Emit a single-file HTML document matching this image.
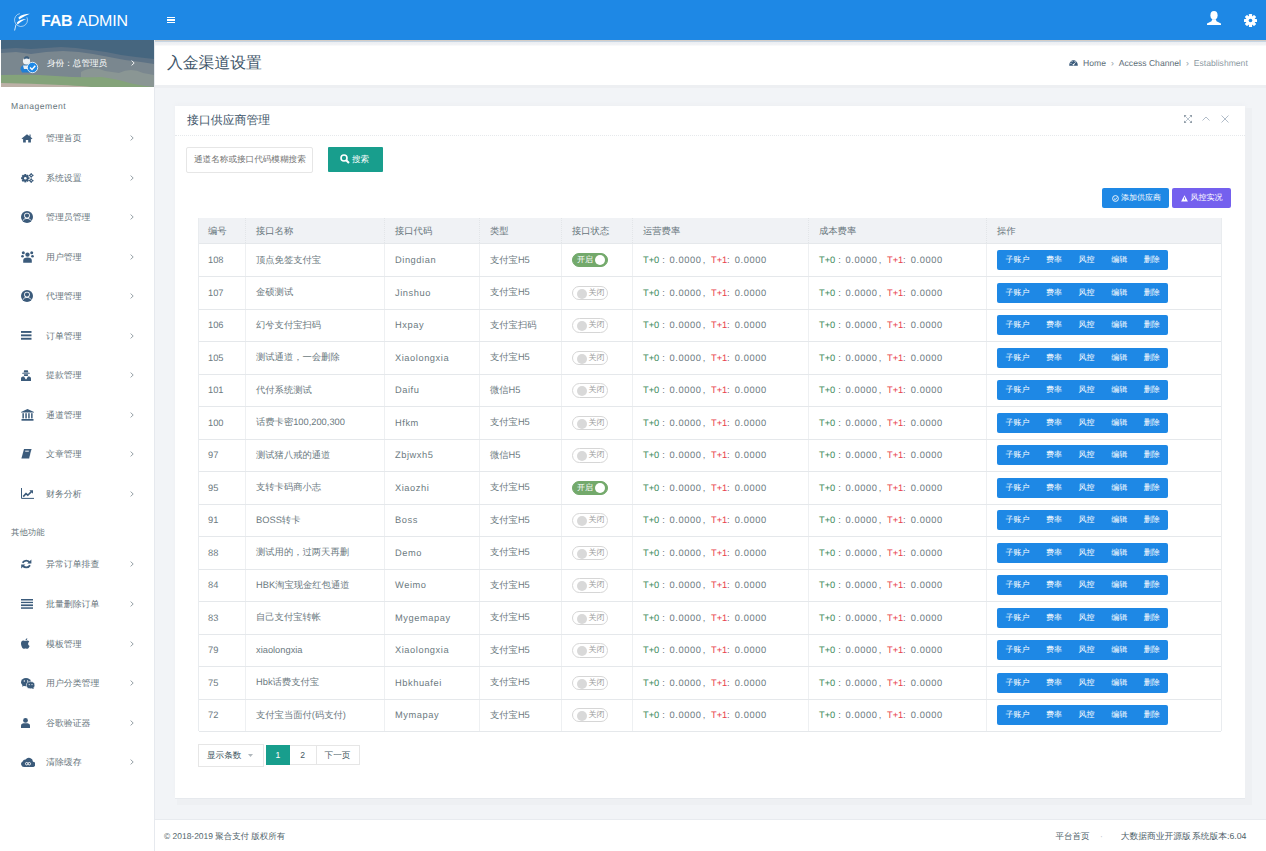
<!DOCTYPE html>
<html><head><meta charset="utf-8">
<style>
*{box-sizing:border-box;margin:0;padding:0}
html,body{width:1266px;height:851px;overflow:hidden}
body{position:relative;background:#f2f4f7;font-family:"Liberation Sans",sans-serif;color:#67757c;text-rendering:geometricPrecision}
.abs{position:absolute}
#hdr{position:absolute;left:0;top:0;width:1266px;height:40px;background:#1e88e5}
#logo{position:absolute;left:13px;top:12px}
#brand{position:absolute;left:41px;top:12.5px;font-size:16px;line-height:18px;color:#fff;white-space:nowrap;letter-spacing:-0.2px;word-spacing:1.5px}
#brand b{font-weight:bold}
#ham{position:absolute;left:167px;top:17px;width:8px;height:6px}
#ham i{position:absolute;left:0;width:8px;height:1.2px;background:#fff}
#side{position:absolute;left:0;top:40px;width:154px;height:811px;background:#fff}
#prof{position:absolute;left:1px;top:0;width:153px;height:47px;overflow:hidden;background:#46667f}
#prof .nm{position:absolute;left:46px;top:17px;font-size:8.6px;line-height:12px;color:#fff;white-space:nowrap}
#prof .ar{position:absolute;left:128px;top:16px;font-size:10px;color:#fff}
.sec{position:absolute;left:11px;font-size:8.6px;color:#67757c;white-space:nowrap;letter-spacing:0.5px}
.mi{position:absolute;left:0;width:154px;height:20px}
.mi .ico{position:absolute;left:21px;top:0;width:14px;height:20px;display:flex;align-items:center;justify-content:flex-start;color:#3b5b7b}
.mi .ico svg{display:block}
.mi .mt{position:absolute;left:46px;top:0;line-height:20px;font-size:8.9px;color:#67757c;white-space:nowrap}
.mi .ar{position:absolute;left:130px;top:7px}
#sline{position:absolute;left:154px;top:40px;width:1px;height:811px;background:#e6e9ee}
#tbar{position:absolute;left:155px;top:40px;width:1111px;height:45px;background:linear-gradient(to bottom,#d4cdc6 0,#d4cdc6 1px,#c6d5e3 1px,#c6d5e3 2px,#eceef2 2px,#f1f3f6 5px,#fff 6px);box-shadow:0 3px 0 #edeff2}
#tbar h1{position:absolute;left:12px;top:14px;font-size:15.8px;line-height:20px;font-weight:normal;color:#3e5569;white-space:nowrap}
#bc{position:absolute;left:1069px;top:57px;height:12px;font-size:8.6px;line-height:12px;white-space:nowrap;color:#5d6e78}
#bc .s{color:#9aa5ab;padding:0 5px}
#bc .l{color:#8d9aa2}
#card{position:absolute;left:175px;top:106px;width:1070px;height:692px;background:#fff;box-shadow:0 1px 0 #e6e9ed,0 -2px 4px #eef0f3}
#card .ttl{position:absolute;left:12px;top:6px;font-size:11.9px;line-height:16px;color:#3e5569;white-space:nowrap}
#card .hl{position:absolute;left:0;top:29px;width:1070px;height:0;border-top:1px dotted #e6e9ec}
#srch{position:absolute;left:11px;top:41px;width:127px;height:25.5px;border:1px solid #e6e6e6;border-radius:2px;font-size:8.6px;line-height:23px;padding-left:7px;color:#757575;white-space:nowrap;overflow:hidden}
#sbtn{position:absolute;left:153px;top:41px;width:54.5px;height:25px;background:#189e8d;border-radius:1px;color:#fff;font-size:8.6px;line-height:25px;white-space:nowrap}
#sbtn svg{position:absolute;left:12px;top:7px}
#sbtn span{position:absolute;left:24px;top:0}
.btn{position:absolute;top:82px;height:20px;border-radius:2px;color:#fff;font-size:8px;line-height:20px;white-space:nowrap}
#tbl{position:absolute;left:198px;top:218px;width:1023.5px;height:513px;border-left:1px solid #e9ecef;border-right:1px solid #e9ecef}
.thead{position:absolute;left:0;top:0;width:100%;height:25px;background:#f0f2f5}
.tr{position:absolute;left:0;width:100%;height:32.5px;border-top:1px solid #e5e8eb}
.tr:last-child{border-bottom:1px solid #e5e8eb;height:33px}
.td{position:absolute;top:0;height:100%;padding-left:10px;font-size:9.3px;white-space:nowrap;display:flex;align-items:center;border-left:1px solid #eef0f2;color:#6c7a81}
.td.code{letter-spacing:0.55px}
.td.th{font-size:9.3px;color:#67757c;border-left:1px dotted #e2e5e8;padding-top:1px}
.td:first-child{border-left:none}
.g{color:#3d8a5c}
.f1,.f2,.f3,.f4,.f5,.f6{display:inline-block;flex:none}
.f1{width:19.3px}.f2{width:7.2px}.f3{letter-spacing:0.6px}.f4{width:8.2px}.f3:nth-child(3){width:33.3px}.f5{width:16.1px}.f6{width:7.7px}
.r{color:#e8414b}
.sw{position:relative;width:36px;height:14.5px;border-radius:8px;border:1px solid #d6d6d6;background:#fff;font-size:8px;line-height:12.5px;white-space:nowrap}
.sw i{position:absolute;left:3.5px;top:2.2px;width:10px;height:10px;border-radius:50%;background:#d9d9d9}
.sw em{position:absolute;left:15.5px;top:0;font-style:normal;color:#9a9a9a}
.sw.on{background:#73a96b;border-color:#73a96b}
.sw.on i{left:21.5px;top:1.2px;background:#fff}
.sw.on em{left:4px;color:#fff}
.ops{display:flex;height:20px;background:#1e88e5;border-radius:2px;padding:0 0 0 8.4px;color:#fff;font-size:8px;line-height:20px}
.ops span{margin-right:16.6px}
.ops span:last-child{margin-right:8.4px}
#pg{position:absolute;left:198px;top:744px}
#footer{position:absolute;left:155px;top:819px;width:1111px;height:32px;background:#fff;border-top:1px solid #e8ebef}
#footer .l{position:absolute;left:9px;top:9.5px;font-size:8.45px;line-height:12px;color:#4f5f6a;white-space:nowrap}
#footer .rt{position:absolute;right:20.5px;top:9.5px;font-size:8.5px;line-height:12px;color:#4f5f6a;white-space:nowrap}
</style></head>
<body>
<div id="hdr">
  <svg id="logo" width="18" height="20" viewBox="0 0 18 20">
    <path d="M6.87 1.6A6.5 6.5 0 1 0 13.9 5.25" fill="none" stroke="#fff" stroke-width="0.8" opacity="0.7"/>
    <path d="M3 12.5L1.6 18.5" fill="none" stroke="#fff" stroke-width="1" opacity="0.8"/>
    <path d="M5.4 5.4C8 2.8 12 2 16.9 1.8C13 3.6 10 4.6 6.2 7.6Z" fill="#fff"/>
    <path d="M3.8 10.8C6 8 9 7.2 13.2 7C10 8.4 7.6 9.8 4.6 12.6Z" fill="#fff"/>
  </svg>
  <div id="brand"><b>FAB</b> ADMIN</div>
  <div id="ham"><i style="top:0"></i><i style="top:2.4px"></i><i style="top:4.8px"></i></div>
  <svg class="abs" style="left:1207px;top:11px" width="14" height="14" viewBox="0 0 14 14">
    <ellipse cx="7" cy="4.3" rx="3.6" ry="4.3" fill="#fff"/>
    <path d="M5.2 8.2H8.8L9.5 10.3 14 12.5V14H0V12.5L4.5 10.3Z" fill="#fff"/>
  </svg>
  <svg class="abs" style="left:1243.5px;top:13.5px" width="13" height="13" viewBox="0 0 13 13">
    <g fill="#fff" transform="translate(6.5 6.5)">
      <rect x="-1.6" y="-6.5" width="3.2" height="13" rx="0.6"/>
      <rect x="-1.6" y="-6.5" width="3.2" height="13" rx="0.6" transform="rotate(45)"/>
      <rect x="-1.6" y="-6.5" width="3.2" height="13" rx="0.6" transform="rotate(90)"/>
      <rect x="-1.6" y="-6.5" width="3.2" height="13" rx="0.6" transform="rotate(135)"/>
      <circle r="4.6"/>
    </g>
    <circle cx="6.5" cy="6.5" r="1.8" fill="#1e88e5"/>
  </svg>
</div>

<div id="side">
  <div id="prof">
    <svg class="abs" style="left:0;top:0" width="153" height="47" viewBox="0 0 153 47">
      <rect width="153" height="47" fill="#46667f"/>
      <path d="M0 9L15 8 30 9 45 8 60 7 75 8 90 10 105 12 120 15 135 17 153 19V47H0Z" fill="#5d7285"/>
      <path d="M0 13L15 12 30 14 45 12 62 11 78 12 92 14 108 17 124 20 140 22 153 24V47H0Z" fill="#7a878f"/>
      <path d="M80 32Q92 25 104 31L118 33Q130 27 142 33L153 35V47H80Z" fill="#8a9694"/>
      <path d="M0 35Q30 34 55 36T100 37Q115 39 125 42T153 47V47H0Z" fill="#84a37a"/>
      <path d="M0 43Q30 43.5 60 45T90 47H0Z" fill="#bcb0a6"/>
    </svg>
    <svg class="abs" style="left:18px;top:15px" width="20" height="19" viewBox="0 0 20 19">
      <path d="M1.5 14C2 10.5 4.5 9.5 8 9.5S13 11 13.5 14L12 17.5H3Z" fill="#1f7fd6"/>
      <circle cx="7.5" cy="6" r="3.6" fill="#eef2f5"/>
      <path d="M5 3C5.5 0.8 9 0.6 10.2 2.5L9.8 4.2C8.5 3.3 6.5 3.3 5.3 4.4Z" fill="#3d5f7e"/>
      <path d="M4 10.5H11L10 14H5Z" fill="#e9eef2"/>
      <circle cx="13.5" cy="12.5" r="5.2" fill="#1e88e5" stroke="#fff" stroke-width="0.8"/>
      <path d="M11 12.5L13 14.5 16.3 10.8" fill="none" stroke="#fff" stroke-width="1.4"/>
    </svg>
    <div class="nm">身份：总管理员</div>
    <svg class="abs" style="left:130px;top:20px" width="4" height="6" viewBox="0 0 4 6"><path d="M0.6 0.6L3.2 3 0.6 5.4" fill="none" stroke="#fff" stroke-width="0.9"/></svg>
  </div>
  <div class="sec" style="top:61px">Management</div>
  <div class="sec" style="top:487px;font-size:8.4px;letter-spacing:0">其他功能</div>
</div>
<div id="sidemenu" class="abs" style="left:0;top:0">
<div class="mi" style="top:128.0px"><span class="ico"><svg width="12" height="10" viewBox="0 0 12 10"><path d="M6 1.2L0.6 5.6 1.2 6.3 2.1 5.6V9.6H4.8V6.9H7.2V9.6H9.9V5.6L10.8 6.3 11.4 5.6 9.6 4.1V1.6H8.5V3.2Z" fill="currentColor"/></svg></span><span class="mt">管理首页</span><svg class="ar" width="4" height="6" viewBox="0 0 4 6"><path d="M0.6 0.6L3.2 3 0.6 5.4" fill="none" stroke="#7d8a92" stroke-width="0.8"/></svg></div>
<div class="mi" style="top:167.5px"><span class="ico"><svg width="13" height="10" viewBox="0 0 13 10"><g transform="translate(4.3 5.2)" fill="currentColor"><rect x="-1" y="-4.2" width="2" height="8.4"/><rect x="-1" y="-4.2" width="2" height="8.4" transform="rotate(45)"/><rect x="-1" y="-4.2" width="2" height="8.4" transform="rotate(90)"/><rect x="-1" y="-4.2" width="2" height="8.4" transform="rotate(135)"/><circle r="3.1"/></g><circle cx="4.3" cy="5.2" r="1.3" fill="#fff"/><g transform="translate(10.2 2.4)" fill="currentColor"><rect x="-0.6" y="-2.3" width="1.2" height="4.6"/><rect x="-2.3" y="-0.6" width="4.6" height="1.2"/><circle r="1.7"/></g><circle cx="10.2" cy="2.4" r="0.6" fill="#fff"/><g transform="translate(10.2 7.6)" fill="currentColor"><rect x="-0.6" y="-2.3" width="1.2" height="4.6"/><rect x="-2.3" y="-0.6" width="4.6" height="1.2"/><circle r="1.7"/></g><circle cx="10.2" cy="7.6" r="0.6" fill="#fff"/></svg></span><span class="mt">系统设置</span><svg class="ar" width="4" height="6" viewBox="0 0 4 6"><path d="M0.6 0.6L3.2 3 0.6 5.4" fill="none" stroke="#7d8a92" stroke-width="0.8"/></svg></div>
<div class="mi" style="top:207.0px"><span class="ico"><svg width="12" height="12" viewBox="0 0 12 12"><circle cx="6" cy="6" r="6" fill="currentColor"/><circle cx="6" cy="4.6" r="2.9" fill="#fff"/><circle cx="6" cy="4.6" r="2.1" fill="currentColor"/><path d="M1.9 9.6Q3.3 7.3 6 7.3T10.1 9.6" fill="none" stroke="#fff" stroke-width="0.9"/></svg></span><span class="mt">管理员管理</span><svg class="ar" width="4" height="6" viewBox="0 0 4 6"><path d="M0.6 0.6L3.2 3 0.6 5.4" fill="none" stroke="#7d8a92" stroke-width="0.8"/></svg></div>
<div class="mi" style="top:246.5px"><span class="ico"><svg width="13" height="12" viewBox="0 0 13 12"><circle cx="6.5" cy="3.6" r="2.2" fill="currentColor"/><circle cx="2.3" cy="1.8" r="1.5" fill="currentColor"/><circle cx="10.7" cy="1.8" r="1.5" fill="currentColor"/><circle cx="1.5" cy="5.3" r="1.3" fill="currentColor"/><circle cx="11.5" cy="5.3" r="1.3" fill="currentColor"/><path d="M2.2 11.8V9.4C2.2 7.6 3.8 6.6 6.5 6.6S10.8 7.6 10.8 9.4V11.8Z" fill="currentColor"/></svg></span><span class="mt">用户管理</span><svg class="ar" width="4" height="6" viewBox="0 0 4 6"><path d="M0.6 0.6L3.2 3 0.6 5.4" fill="none" stroke="#7d8a92" stroke-width="0.8"/></svg></div>
<div class="mi" style="top:286.0px"><span class="ico"><svg width="12" height="12" viewBox="0 0 12 12"><circle cx="6" cy="6" r="6" fill="currentColor"/><circle cx="6" cy="4.6" r="2.9" fill="#fff"/><circle cx="6" cy="4.6" r="2.1" fill="currentColor"/><path d="M1.9 9.6Q3.3 7.3 6 7.3T10.1 9.6" fill="none" stroke="#fff" stroke-width="0.9"/></svg></span><span class="mt">代理管理</span><svg class="ar" width="4" height="6" viewBox="0 0 4 6"><path d="M0.6 0.6L3.2 3 0.6 5.4" fill="none" stroke="#7d8a92" stroke-width="0.8"/></svg></div>
<div class="mi" style="top:325.5px"><span class="ico"><svg width="11" height="9" viewBox="0 0 11 9"><rect x="0" y="0" width="10.5" height="1.9" fill="currentColor"/><rect x="0" y="3.4" width="10.5" height="1.9" fill="currentColor"/><rect x="0" y="6.8" width="10.5" height="1.9" fill="currentColor"/></svg></span><span class="mt">订单管理</span><svg class="ar" width="4" height="6" viewBox="0 0 4 6"><path d="M0.6 0.6L3.2 3 0.6 5.4" fill="none" stroke="#7d8a92" stroke-width="0.8"/></svg></div>
<div class="mi" style="top:365.0px"><span class="ico"><svg width="10" height="11" viewBox="0 0 10 11"><path d="M2.6 2.6L3.2 0.3H6.8L7.4 2.6Z" fill="currentColor"/><rect x="1.2" y="2.8" width="7.6" height="0.9" fill="currentColor"/><path d="M2.8 4.2H7.2L6.8 6H3.2Z" fill="currentColor"/><path d="M0 11V8.4C0 7 1.2 6.4 3 6.4L5 9.5 7 6.4C8.8 6.4 10 7 10 8.4V11Z" fill="currentColor"/><path d="M4.2 7.6H5.8L5 9.6Z" fill="#fff"/></svg></span><span class="mt">提款管理</span><svg class="ar" width="4" height="6" viewBox="0 0 4 6"><path d="M0.6 0.6L3.2 3 0.6 5.4" fill="none" stroke="#7d8a92" stroke-width="0.8"/></svg></div>
<div class="mi" style="top:404.5px"><span class="ico"><svg width="13" height="12" viewBox="0 0 13 12"><path d="M6.5 0L0 3V3.6H13V3Z" fill="currentColor"/><rect x="1.4" y="4.2" width="1.5" height="5.2" fill="currentColor"/><rect x="4.3" y="4.2" width="1.5" height="5.2" fill="currentColor"/><rect x="7.2" y="4.2" width="1.5" height="5.2" fill="currentColor"/><rect x="10.1" y="4.2" width="1.5" height="5.2" fill="currentColor"/><rect x="0.5" y="10" width="12" height="1.7" fill="currentColor"/></svg></span><span class="mt">通道管理</span><svg class="ar" width="4" height="6" viewBox="0 0 4 6"><path d="M0.6 0.6L3.2 3 0.6 5.4" fill="none" stroke="#7d8a92" stroke-width="0.8"/></svg></div>
<div class="mi" style="top:444.0px"><span class="ico"><svg width="11" height="10" viewBox="0 0 11 10"><path d="M3 0H10.6L8.3 9.6H0.4Z" fill="currentColor"/><rect x="4.2" y="1.6" width="3.6" height="1.2" fill="#fff" opacity="0.8"/><path d="M10.6 0.8L8.5 9.8" stroke="#fff" stroke-width="0.5"/></svg></span><span class="mt">文章管理</span><svg class="ar" width="4" height="6" viewBox="0 0 4 6"><path d="M0.6 0.6L3.2 3 0.6 5.4" fill="none" stroke="#7d8a92" stroke-width="0.8"/></svg></div>
<div class="mi" style="top:483.5px"><span class="ico"><svg width="13" height="11" viewBox="0 0 13 11"><path d="M0.5 0V10.4H13" fill="none" stroke="currentColor" stroke-width="1"/><path d="M2.2 8.6L5 5.6 6.8 7.2 10.4 3.6" fill="none" stroke="currentColor" stroke-width="1.6"/><path d="M8.4 2.2H12V5.8Z" fill="currentColor"/></svg></span><span class="mt">财务分析</span><svg class="ar" width="4" height="6" viewBox="0 0 4 6"><path d="M0.6 0.6L3.2 3 0.6 5.4" fill="none" stroke="#7d8a92" stroke-width="0.8"/></svg></div>
<div class="mi" style="top:554.3px"><span class="ico"><svg width="11" height="10" viewBox="0 0 11 10"><path d="M9 3.8A4.2 4.2 0 0 0 1.6 3.8" fill="none" stroke="currentColor" stroke-width="1.8"/><path d="M10.4 0.4V4.6H6.2Z" fill="currentColor"/><path d="M1.6 6.2A4.2 4.2 0 0 0 9 6.2" fill="none" stroke="currentColor" stroke-width="1.8"/><path d="M0.2 9.6V5.4H4.4Z" fill="currentColor"/></svg></span><span class="mt">异常订单排查</span><svg class="ar" width="4" height="6" viewBox="0 0 4 6"><path d="M0.6 0.6L3.2 3 0.6 5.4" fill="none" stroke="#7d8a92" stroke-width="0.8"/></svg></div>
<div class="mi" style="top:593.9px"><span class="ico"><svg width="12" height="10" viewBox="0 0 12 10"><rect y="0" width="12" height="1.5" fill="currentColor"/><rect y="2.8" width="12" height="1.3" fill="currentColor"/><rect y="5.4" width="12" height="1.7" fill="currentColor"/><rect y="8.3" width="12" height="1.5" fill="currentColor"/></svg></span><span class="mt">批量删除订单</span><svg class="ar" width="4" height="6" viewBox="0 0 4 6"><path d="M0.6 0.6L3.2 3 0.6 5.4" fill="none" stroke="#7d8a92" stroke-width="0.8"/></svg></div>
<div class="mi" style="top:633.5px"><span class="ico"><svg width="9" height="11" viewBox="0 0 9 11"><path d="M4.5 3C3.6 3 3.1 2.5 2.3 2.5 1 2.5 0 3.8 0 5.6 0 7.8 1.5 10.8 2.6 10.8 3.4 10.8 3.6 10.4 4.5 10.4 5.4 10.4 5.6 10.8 6.4 10.8 7.4 10.8 8.3 8.9 8.6 8 7.6 7.5 7.1 6.7 7.1 5.7 7.1 4.8 7.6 4.1 8.3 3.6 7.8 2.9 7 2.5 6.3 2.5 5.6 2.5 5.1 3 4.5 3Z" fill="currentColor"/><path d="M4.5 2.4C4.4 1.4 5.2 0.4 6.3 0.2 6.4 1.2 5.6 2.3 4.5 2.4Z" fill="currentColor"/></svg></span><span class="mt">模板管理</span><svg class="ar" width="4" height="6" viewBox="0 0 4 6"><path d="M0.6 0.6L3.2 3 0.6 5.4" fill="none" stroke="#7d8a92" stroke-width="0.8"/></svg></div>
<div class="mi" style="top:673.1px"><span class="ico"><svg width="14" height="11" viewBox="0 0 14 11"><ellipse cx="5" cy="4.2" rx="5" ry="4.1" fill="currentColor"/><path d="M1.5 6.5L1.2 8.8 3.6 7.4Z" fill="currentColor"/><circle cx="3.3" cy="3" r="0.65" fill="#fff"/><circle cx="6.6" cy="3" r="0.65" fill="#fff"/><ellipse cx="9.6" cy="7.2" rx="4.2" ry="3.6" fill="currentColor" stroke="#fff" stroke-width="0.6"/><path d="M12.2 9.5L12.8 11 10.6 10.3Z" fill="currentColor"/><circle cx="8.2" cy="6.6" r="0.55" fill="#fff"/><circle cx="11" cy="6.6" r="0.55" fill="#fff"/></svg></span><span class="mt">用户分类管理</span><svg class="ar" width="4" height="6" viewBox="0 0 4 6"><path d="M0.6 0.6L3.2 3 0.6 5.4" fill="none" stroke="#7d8a92" stroke-width="0.8"/></svg></div>
<div class="mi" style="top:712.7px"><span class="ico"><svg width="9" height="10" viewBox="0 0 9 10"><circle cx="4.5" cy="2.4" r="2.4" fill="currentColor"/><path d="M0 10V7.6C0 5.8 1.4 5.2 4.5 5.2S9 5.8 9 7.6V10Z" fill="currentColor"/></svg></span><span class="mt">谷歌验证器</span><svg class="ar" width="4" height="6" viewBox="0 0 4 6"><path d="M0.6 0.6L3.2 3 0.6 5.4" fill="none" stroke="#7d8a92" stroke-width="0.8"/></svg></div>
<div class="mi" style="top:752.3px"><span class="ico"><svg width="14" height="10" viewBox="0 0 14 10"><path d="M3 10A3 3 0 0 1 1.6 4.4 3 3 0 0 1 4.6 2.4 4.2 4.2 0 0 1 12 4.8 2.6 2.6 0 0 1 11.4 10Z" fill="currentColor"/><circle cx="5.7" cy="6.7" r="1.25" fill="none" stroke="#fff" stroke-width="0.9"/><circle cx="8.3" cy="6.7" r="1.25" fill="none" stroke="#fff" stroke-width="0.9"/></svg></span><span class="mt">清除缓存</span><svg class="ar" width="4" height="6" viewBox="0 0 4 6"><path d="M0.6 0.6L3.2 3 0.6 5.4" fill="none" stroke="#7d8a92" stroke-width="0.8"/></svg></div>
</div>
<div id="sline"></div>

<div id="tbar"><h1>入金渠道设置</h1></div>
<div id="bc">
  <svg style="position:absolute;left:0;top:2px" width="9" height="7" viewBox="0 0 9 7"><path d="M0.2 6.8C0.2 -0.6 8.8 -0.6 8.8 6.8Z" fill="#3b5b7b"/><circle cx="2" cy="4.2" r="0.55" fill="#fff"/><circle cx="3" cy="2.3" r="0.55" fill="#fff"/><circle cx="6" cy="2.3" r="0.55" fill="#fff"/><path d="M4.5 5.6L6.6 3.4" stroke="#fff" stroke-width="0.8"/><circle cx="4.5" cy="5.6" r="0.9" fill="#fff"/></svg>
  <span style="padding-left:14px">Home</span><span class="s">›</span>Access Channel<span class="s">›</span><span class="l">Establishment</span>
</div>

<div class="abs" style="left:1245px;top:108px;width:7px;height:697px;background:#eef0f3"></div>
<div class="abs" style="left:177px;top:798px;width:1068px;height:7px;background:#eef0f3"></div>
<div id="card">
  <div class="ttl">接口供应商管理</div>
  <svg class="abs" style="left:1009px;top:9px" width="8" height="8" viewBox="0 0 8 8"><path d="M0.5 0.5L7.5 7.5M7.5 0.5L0.5 7.5" stroke="#a9b6c3" stroke-width="0.8"/><path d="M0 0H2.5L0 2.5ZM8 0V2.5L5.5 0ZM0 8V5.5L2.5 8ZM8 8H5.5L8 5.5Z" fill="#8f9ba6"/></svg>
  <svg class="abs" style="left:1027px;top:10px" width="8" height="6" viewBox="0 0 8 6"><path d="M0.5 4.5L4 1 7.5 4.5" fill="none" stroke="#a9b6c3" stroke-width="0.9"/></svg>
  <svg class="abs" style="left:1046px;top:9px" width="8" height="8" viewBox="0 0 8 8"><path d="M0.5 0.5L7.5 7.5M7.5 0.5L0.5 7.5" fill="none" stroke="#a9b6c3" stroke-width="0.9"/></svg>
  <div class="hl"></div>
  <div id="srch">通道名称或接口代码模糊搜索</div>
  <div id="sbtn"><svg width="10" height="10" viewBox="0 0 10 10"><circle cx="4" cy="4" r="3" fill="none" stroke="#fff" stroke-width="1.6"/><path d="M6.2 6.2L9 9" stroke="#fff" stroke-width="2"/></svg><span>搜索</span></div>
  <div class="btn" style="left:927px;width:67px;background:#1e88e5">
    <svg class="abs" style="left:10px;top:6.5px" width="7" height="7" viewBox="0 0 7 7"><circle cx="3.5" cy="3.5" r="2.9" fill="none" stroke="#fff" stroke-width="0.9"/><path d="M2 3.6L3.2 4.7 5.1 2.5" fill="none" stroke="#fff" stroke-width="0.9"/></svg>
    <span class="abs" style="left:19px;top:0">添加供应商</span>
  </div>
  <div class="btn" style="left:997px;width:59px;background:#7460ee">
    <svg class="abs" style="left:9px;top:6.5px" width="7" height="7" viewBox="0 0 7 7"><path d="M3.5 0.3L6.9 6.6H0.1Z" fill="#fff"/><rect x="3.05" y="2.4" width="0.9" height="2.3" fill="#7460ee"/></svg>
    <span class="abs" style="left:18.5px;top:0">风控实况</span>
  </div>
</div>

<div id="tbl">
<div class="thead"><div class="td th" style="left:-1.0px;width:47.0px">编号</div><div class="td th" style="left:46.0px;width:139.0px">接口名称</div><div class="td th" style="left:185.0px;width:95.0px">接口代码</div><div class="td th" style="left:280.0px;width:82.0px">类型</div><div class="td th" style="left:362.0px;width:71.0px">接口状态</div><div class="td th" style="left:433.0px;width:176.0px">运营费率</div><div class="td th" style="left:609.0px;width:178.0px">成本费率</div><div class="td th" style="left:787.0px;width:235.0px">操作</div></div>
<div class="tr" style="top:25.5px;top:25px;height:33px"><div class="td " style="left:-1.0px;width:47.0px">108</div><div class="td cjk" style="left:46.0px;width:139.0px">顶点免签支付宝</div><div class="td code" style="left:185.0px;width:95.0px">Dingdian</div><div class="td " style="left:280.0px;width:82.0px">支付宝H5</div><div class="td " style="left:362.0px;width:71.0px"><div class="sw on"><em>开启</em><i></i></div></div><div class="td " style="left:433.0px;width:176.0px"><span class="f1 g">T+0</span><span class="f2">:</span><span class="f3">0.0000</span><span class="f4">,</span><span class="f5 r">T+1</span><span class="f6">:</span><span class="f3">0.0000</span></div><div class="td " style="left:609.0px;width:178.0px"><span class="f1 g">T+0</span><span class="f2">:</span><span class="f3">0.0000</span><span class="f4">,</span><span class="f5 r">T+1</span><span class="f6">:</span><span class="f3">0.0000</span></div><div class="td " style="left:787.0px;width:235.0px"><div class="ops"><span>子账户</span><span>费率</span><span>风控</span><span>编辑</span><span>删除</span></div></div></div>
<div class="tr" style="top:58.0px"><div class="td " style="left:-1.0px;width:47.0px">107</div><div class="td cjk" style="left:46.0px;width:139.0px">金硕测试</div><div class="td code" style="left:185.0px;width:95.0px">Jinshuo</div><div class="td " style="left:280.0px;width:82.0px">支付宝H5</div><div class="td " style="left:362.0px;width:71.0px"><div class="sw"><i></i><em>关闭</em></div></div><div class="td " style="left:433.0px;width:176.0px"><span class="f1 g">T+0</span><span class="f2">:</span><span class="f3">0.0000</span><span class="f4">,</span><span class="f5 r">T+1</span><span class="f6">:</span><span class="f3">0.0000</span></div><div class="td " style="left:609.0px;width:178.0px"><span class="f1 g">T+0</span><span class="f2">:</span><span class="f3">0.0000</span><span class="f4">,</span><span class="f5 r">T+1</span><span class="f6">:</span><span class="f3">0.0000</span></div><div class="td " style="left:787.0px;width:235.0px"><div class="ops"><span>子账户</span><span>费率</span><span>风控</span><span>编辑</span><span>删除</span></div></div></div>
<div class="tr" style="top:90.5px"><div class="td " style="left:-1.0px;width:47.0px">106</div><div class="td cjk" style="left:46.0px;width:139.0px">幻兮支付宝扫码</div><div class="td code" style="left:185.0px;width:95.0px">Hxpay</div><div class="td " style="left:280.0px;width:82.0px">支付宝扫码</div><div class="td " style="left:362.0px;width:71.0px"><div class="sw"><i></i><em>关闭</em></div></div><div class="td " style="left:433.0px;width:176.0px"><span class="f1 g">T+0</span><span class="f2">:</span><span class="f3">0.0000</span><span class="f4">,</span><span class="f5 r">T+1</span><span class="f6">:</span><span class="f3">0.0000</span></div><div class="td " style="left:609.0px;width:178.0px"><span class="f1 g">T+0</span><span class="f2">:</span><span class="f3">0.0000</span><span class="f4">,</span><span class="f5 r">T+1</span><span class="f6">:</span><span class="f3">0.0000</span></div><div class="td " style="left:787.0px;width:235.0px"><div class="ops"><span>子账户</span><span>费率</span><span>风控</span><span>编辑</span><span>删除</span></div></div></div>
<div class="tr" style="top:123.0px"><div class="td " style="left:-1.0px;width:47.0px">105</div><div class="td cjk" style="left:46.0px;width:139.0px">测试通道，一会删除</div><div class="td code" style="left:185.0px;width:95.0px">Xiaolongxia</div><div class="td " style="left:280.0px;width:82.0px">支付宝H5</div><div class="td " style="left:362.0px;width:71.0px"><div class="sw"><i></i><em>关闭</em></div></div><div class="td " style="left:433.0px;width:176.0px"><span class="f1 g">T+0</span><span class="f2">:</span><span class="f3">0.0000</span><span class="f4">,</span><span class="f5 r">T+1</span><span class="f6">:</span><span class="f3">0.0000</span></div><div class="td " style="left:609.0px;width:178.0px"><span class="f1 g">T+0</span><span class="f2">:</span><span class="f3">0.0000</span><span class="f4">,</span><span class="f5 r">T+1</span><span class="f6">:</span><span class="f3">0.0000</span></div><div class="td " style="left:787.0px;width:235.0px"><div class="ops"><span>子账户</span><span>费率</span><span>风控</span><span>编辑</span><span>删除</span></div></div></div>
<div class="tr" style="top:155.5px"><div class="td " style="left:-1.0px;width:47.0px">101</div><div class="td cjk" style="left:46.0px;width:139.0px">代付系统测试</div><div class="td code" style="left:185.0px;width:95.0px">Daifu</div><div class="td " style="left:280.0px;width:82.0px">微信H5</div><div class="td " style="left:362.0px;width:71.0px"><div class="sw"><i></i><em>关闭</em></div></div><div class="td " style="left:433.0px;width:176.0px"><span class="f1 g">T+0</span><span class="f2">:</span><span class="f3">0.0000</span><span class="f4">,</span><span class="f5 r">T+1</span><span class="f6">:</span><span class="f3">0.0000</span></div><div class="td " style="left:609.0px;width:178.0px"><span class="f1 g">T+0</span><span class="f2">:</span><span class="f3">0.0000</span><span class="f4">,</span><span class="f5 r">T+1</span><span class="f6">:</span><span class="f3">0.0000</span></div><div class="td " style="left:787.0px;width:235.0px"><div class="ops"><span>子账户</span><span>费率</span><span>风控</span><span>编辑</span><span>删除</span></div></div></div>
<div class="tr" style="top:188.0px"><div class="td " style="left:-1.0px;width:47.0px">100</div><div class="td cjk" style="left:46.0px;width:139.0px">话费卡密100,200,300</div><div class="td code" style="left:185.0px;width:95.0px">Hfkm</div><div class="td " style="left:280.0px;width:82.0px">支付宝H5</div><div class="td " style="left:362.0px;width:71.0px"><div class="sw"><i></i><em>关闭</em></div></div><div class="td " style="left:433.0px;width:176.0px"><span class="f1 g">T+0</span><span class="f2">:</span><span class="f3">0.0000</span><span class="f4">,</span><span class="f5 r">T+1</span><span class="f6">:</span><span class="f3">0.0000</span></div><div class="td " style="left:609.0px;width:178.0px"><span class="f1 g">T+0</span><span class="f2">:</span><span class="f3">0.0000</span><span class="f4">,</span><span class="f5 r">T+1</span><span class="f6">:</span><span class="f3">0.0000</span></div><div class="td " style="left:787.0px;width:235.0px"><div class="ops"><span>子账户</span><span>费率</span><span>风控</span><span>编辑</span><span>删除</span></div></div></div>
<div class="tr" style="top:220.5px"><div class="td " style="left:-1.0px;width:47.0px">97</div><div class="td cjk" style="left:46.0px;width:139.0px">测试猪八戒的通道</div><div class="td code" style="left:185.0px;width:95.0px">Zbjwxh5</div><div class="td " style="left:280.0px;width:82.0px">微信H5</div><div class="td " style="left:362.0px;width:71.0px"><div class="sw"><i></i><em>关闭</em></div></div><div class="td " style="left:433.0px;width:176.0px"><span class="f1 g">T+0</span><span class="f2">:</span><span class="f3">0.0000</span><span class="f4">,</span><span class="f5 r">T+1</span><span class="f6">:</span><span class="f3">0.0000</span></div><div class="td " style="left:609.0px;width:178.0px"><span class="f1 g">T+0</span><span class="f2">:</span><span class="f3">0.0000</span><span class="f4">,</span><span class="f5 r">T+1</span><span class="f6">:</span><span class="f3">0.0000</span></div><div class="td " style="left:787.0px;width:235.0px"><div class="ops"><span>子账户</span><span>费率</span><span>风控</span><span>编辑</span><span>删除</span></div></div></div>
<div class="tr" style="top:253.0px"><div class="td " style="left:-1.0px;width:47.0px">95</div><div class="td cjk" style="left:46.0px;width:139.0px">支转卡码商小志</div><div class="td code" style="left:185.0px;width:95.0px">Xiaozhi</div><div class="td " style="left:280.0px;width:82.0px">支付宝H5</div><div class="td " style="left:362.0px;width:71.0px"><div class="sw on"><em>开启</em><i></i></div></div><div class="td " style="left:433.0px;width:176.0px"><span class="f1 g">T+0</span><span class="f2">:</span><span class="f3">0.0000</span><span class="f4">,</span><span class="f5 r">T+1</span><span class="f6">:</span><span class="f3">0.0000</span></div><div class="td " style="left:609.0px;width:178.0px"><span class="f1 g">T+0</span><span class="f2">:</span><span class="f3">0.0000</span><span class="f4">,</span><span class="f5 r">T+1</span><span class="f6">:</span><span class="f3">0.0000</span></div><div class="td " style="left:787.0px;width:235.0px"><div class="ops"><span>子账户</span><span>费率</span><span>风控</span><span>编辑</span><span>删除</span></div></div></div>
<div class="tr" style="top:285.5px"><div class="td " style="left:-1.0px;width:47.0px">91</div><div class="td cjk" style="left:46.0px;width:139.0px">BOSS转卡</div><div class="td code" style="left:185.0px;width:95.0px">Boss</div><div class="td " style="left:280.0px;width:82.0px">支付宝H5</div><div class="td " style="left:362.0px;width:71.0px"><div class="sw"><i></i><em>关闭</em></div></div><div class="td " style="left:433.0px;width:176.0px"><span class="f1 g">T+0</span><span class="f2">:</span><span class="f3">0.0000</span><span class="f4">,</span><span class="f5 r">T+1</span><span class="f6">:</span><span class="f3">0.0000</span></div><div class="td " style="left:609.0px;width:178.0px"><span class="f1 g">T+0</span><span class="f2">:</span><span class="f3">0.0000</span><span class="f4">,</span><span class="f5 r">T+1</span><span class="f6">:</span><span class="f3">0.0000</span></div><div class="td " style="left:787.0px;width:235.0px"><div class="ops"><span>子账户</span><span>费率</span><span>风控</span><span>编辑</span><span>删除</span></div></div></div>
<div class="tr" style="top:318.0px"><div class="td " style="left:-1.0px;width:47.0px">88</div><div class="td cjk" style="left:46.0px;width:139.0px">测试用的，过两天再删</div><div class="td code" style="left:185.0px;width:95.0px">Demo</div><div class="td " style="left:280.0px;width:82.0px">支付宝H5</div><div class="td " style="left:362.0px;width:71.0px"><div class="sw"><i></i><em>关闭</em></div></div><div class="td " style="left:433.0px;width:176.0px"><span class="f1 g">T+0</span><span class="f2">:</span><span class="f3">0.0000</span><span class="f4">,</span><span class="f5 r">T+1</span><span class="f6">:</span><span class="f3">0.0000</span></div><div class="td " style="left:609.0px;width:178.0px"><span class="f1 g">T+0</span><span class="f2">:</span><span class="f3">0.0000</span><span class="f4">,</span><span class="f5 r">T+1</span><span class="f6">:</span><span class="f3">0.0000</span></div><div class="td " style="left:787.0px;width:235.0px"><div class="ops"><span>子账户</span><span>费率</span><span>风控</span><span>编辑</span><span>删除</span></div></div></div>
<div class="tr" style="top:350.5px"><div class="td " style="left:-1.0px;width:47.0px">84</div><div class="td cjk" style="left:46.0px;width:139.0px">HBK淘宝现金红包通道</div><div class="td code" style="left:185.0px;width:95.0px">Weimo</div><div class="td " style="left:280.0px;width:82.0px">支付宝H5</div><div class="td " style="left:362.0px;width:71.0px"><div class="sw"><i></i><em>关闭</em></div></div><div class="td " style="left:433.0px;width:176.0px"><span class="f1 g">T+0</span><span class="f2">:</span><span class="f3">0.0000</span><span class="f4">,</span><span class="f5 r">T+1</span><span class="f6">:</span><span class="f3">0.0000</span></div><div class="td " style="left:609.0px;width:178.0px"><span class="f1 g">T+0</span><span class="f2">:</span><span class="f3">0.0000</span><span class="f4">,</span><span class="f5 r">T+1</span><span class="f6">:</span><span class="f3">0.0000</span></div><div class="td " style="left:787.0px;width:235.0px"><div class="ops"><span>子账户</span><span>费率</span><span>风控</span><span>编辑</span><span>删除</span></div></div></div>
<div class="tr" style="top:383.0px"><div class="td " style="left:-1.0px;width:47.0px">83</div><div class="td cjk" style="left:46.0px;width:139.0px">自己支付宝转帐</div><div class="td code" style="left:185.0px;width:95.0px">Mygemapay</div><div class="td " style="left:280.0px;width:82.0px">支付宝H5</div><div class="td " style="left:362.0px;width:71.0px"><div class="sw"><i></i><em>关闭</em></div></div><div class="td " style="left:433.0px;width:176.0px"><span class="f1 g">T+0</span><span class="f2">:</span><span class="f3">0.0000</span><span class="f4">,</span><span class="f5 r">T+1</span><span class="f6">:</span><span class="f3">0.0000</span></div><div class="td " style="left:609.0px;width:178.0px"><span class="f1 g">T+0</span><span class="f2">:</span><span class="f3">0.0000</span><span class="f4">,</span><span class="f5 r">T+1</span><span class="f6">:</span><span class="f3">0.0000</span></div><div class="td " style="left:787.0px;width:235.0px"><div class="ops"><span>子账户</span><span>费率</span><span>风控</span><span>编辑</span><span>删除</span></div></div></div>
<div class="tr" style="top:415.5px"><div class="td " style="left:-1.0px;width:47.0px">79</div><div class="td cjk" style="left:46.0px;width:139.0px">xiaolongxia</div><div class="td code" style="left:185.0px;width:95.0px">Xiaolongxia</div><div class="td " style="left:280.0px;width:82.0px">支付宝H5</div><div class="td " style="left:362.0px;width:71.0px"><div class="sw"><i></i><em>关闭</em></div></div><div class="td " style="left:433.0px;width:176.0px"><span class="f1 g">T+0</span><span class="f2">:</span><span class="f3">0.0000</span><span class="f4">,</span><span class="f5 r">T+1</span><span class="f6">:</span><span class="f3">0.0000</span></div><div class="td " style="left:609.0px;width:178.0px"><span class="f1 g">T+0</span><span class="f2">:</span><span class="f3">0.0000</span><span class="f4">,</span><span class="f5 r">T+1</span><span class="f6">:</span><span class="f3">0.0000</span></div><div class="td " style="left:787.0px;width:235.0px"><div class="ops"><span>子账户</span><span>费率</span><span>风控</span><span>编辑</span><span>删除</span></div></div></div>
<div class="tr" style="top:448.0px"><div class="td " style="left:-1.0px;width:47.0px">75</div><div class="td cjk" style="left:46.0px;width:139.0px">Hbk话费支付宝</div><div class="td code" style="left:185.0px;width:95.0px">Hbkhuafei</div><div class="td " style="left:280.0px;width:82.0px">支付宝H5</div><div class="td " style="left:362.0px;width:71.0px"><div class="sw"><i></i><em>关闭</em></div></div><div class="td " style="left:433.0px;width:176.0px"><span class="f1 g">T+0</span><span class="f2">:</span><span class="f3">0.0000</span><span class="f4">,</span><span class="f5 r">T+1</span><span class="f6">:</span><span class="f3">0.0000</span></div><div class="td " style="left:609.0px;width:178.0px"><span class="f1 g">T+0</span><span class="f2">:</span><span class="f3">0.0000</span><span class="f4">,</span><span class="f5 r">T+1</span><span class="f6">:</span><span class="f3">0.0000</span></div><div class="td " style="left:787.0px;width:235.0px"><div class="ops"><span>子账户</span><span>费率</span><span>风控</span><span>编辑</span><span>删除</span></div></div></div>
<div class="tr" style="top:480.5px"><div class="td " style="left:-1.0px;width:47.0px">72</div><div class="td cjk" style="left:46.0px;width:139.0px">支付宝当面付(码支付)</div><div class="td code" style="left:185.0px;width:95.0px">Mymapay</div><div class="td " style="left:280.0px;width:82.0px">支付宝H5</div><div class="td " style="left:362.0px;width:71.0px"><div class="sw"><i></i><em>关闭</em></div></div><div class="td " style="left:433.0px;width:176.0px"><span class="f1 g">T+0</span><span class="f2">:</span><span class="f3">0.0000</span><span class="f4">,</span><span class="f5 r">T+1</span><span class="f6">:</span><span class="f3">0.0000</span></div><div class="td " style="left:609.0px;width:178.0px"><span class="f1 g">T+0</span><span class="f2">:</span><span class="f3">0.0000</span><span class="f4">,</span><span class="f5 r">T+1</span><span class="f6">:</span><span class="f3">0.0000</span></div><div class="td " style="left:787.0px;width:235.0px"><div class="ops"><span>子账户</span><span>费率</span><span>风控</span><span>编辑</span><span>删除</span></div></div></div>
</div>

<div id="pg">
  <div class="abs" style="left:0;top:0;width:65.5px;height:23px;border:1px solid #e6e6e6;background:#fff;font-size:8.6px;line-height:21px;padding-left:8px;white-space:nowrap;color:#455a64">显示条数</div>
  <svg class="abs" style="left:50px;top:10px" width="5" height="3" viewBox="0 0 5 3"><path d="M0 0H5L2.5 3Z" fill="#b0b7bc"/></svg>
  <div class="abs" style="left:68px;top:1px;width:24px;height:20px;background:#189e8d;color:#fff;font-size:8.6px;line-height:20px;text-align:center">1</div>
  <div class="abs" style="left:92px;top:1px;width:25.5px;height:20px;border:1px solid #e6e6e6;border-left:none;border-right:none;background:#fff;color:#455a64;font-size:8.6px;line-height:18px;text-align:center">2</div>
  <div class="abs" style="left:117.5px;top:1px;width:44px;height:20px;border:1px solid #e6e6e6;background:#fff;color:#455a64;font-size:8.6px;line-height:18px;text-align:center">下一页</div>
</div>

<div id="footer">
  <div class="l">© 2018-2019 聚合支付 版权所有</div>
  <div class="rt" style="right:auto;left:900.5px">平台首页</div><div class="rt" style="right:auto;left:945px;color:#b0b8c0">·</div><div class="rt" style="right:19.5px;font-size:8.75px;word-spacing:-1.2px">大数据商业开源版 系统版本:6.04</div>
</div>
</body></html>
